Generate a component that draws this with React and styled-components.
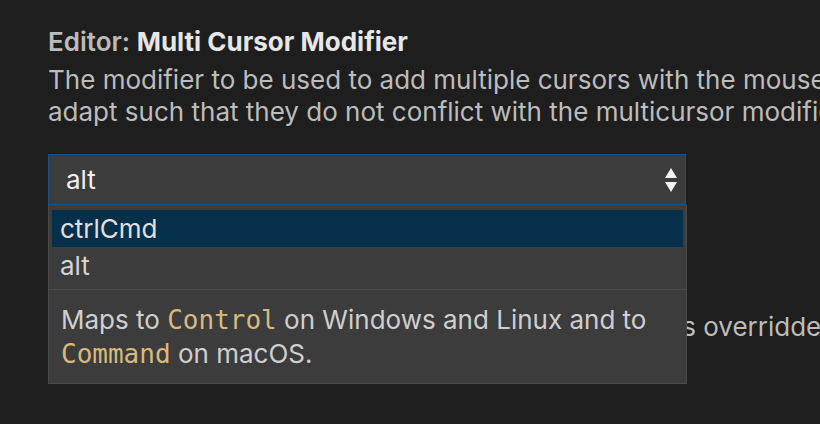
import React from "react"
import styled, { createGlobalStyle } from "styled-components"

const Global = createGlobalStyle`
  html, body {
    margin: 0;
    padding: 0;
    background: #1e1e1e;
    overflow: hidden;
  }
  body {
    font-family: Inter, "Noto Sans", "Liberation Sans", sans-serif;
    -webkit-font-smoothing: antialiased;
  }
`

const Page = styled.div`
  width: 820px;
  height: 424px;
  overflow: hidden;
  padding: 28px 0 0 48px;
  box-sizing: border-box;
`

const Setting = styled.div`
  position: relative;
  display: flex;
  flex-direction: column;
  margin-top: ${(p) => p.gap || 0}px;
`

const Title = styled.div`
  font-size: 26px;
  line-height: 28px;
  font-weight: 700;
  color: #e7e7e7;
  white-space: nowrap;
`

const Category = styled.span`
  color: #bbbbbb;
  font-weight: 600;
`

const Description = styled.div`
  margin-top: 8px;
  font-size: 26px;
  line-height: 32px;
  color: #bcbcbc;
  white-space: nowrap;
`

const SelectBox = styled.div`
  margin-top: 26px;
  width: 638px;
  height: 51px;
  box-sizing: border-box;
  border: 1px solid #21507c;
  background: #3c3c3c;
  display: flex;
  align-items: center;
  justify-content: space-between;
  padding: 0 7px 0 17px;
  font-size: 26px;
  color: #f0f0f0;
`

const Menu = styled.div`
  position: absolute;
  left: 0;
  top: 177px;
  width: 639px;
  height: 179px;
  box-sizing: border-box;
  background: #3c3c3c;
  border: 1px solid #4a4a4a;
  border-top: none;
  padding-top: 5px;
  display: flex;
  flex-direction: column;
  z-index: 2;
`

const Options = styled.div`
  display: flex;
  flex-direction: column;
  padding: 0 3px 5px;
`

const Option = styled.div`
  height: 37px;
  display: flex;
  align-items: center;
  padding-left: 8px;
  font-size: 26px;
  color: ${(p) => (p.selected ? "#e0e0e0" : "#d4d4d4")};
  background: ${(p) => (p.selected ? "#062f4a" : "transparent")};
`

const Help = styled.div`
  border-top: 1px solid #4a4a4a;
  padding: 13px 12px 0;
  font-size: 26px;
  line-height: 33px;
  color: #cfcfcf;
  white-space: nowrap;
`

const Code = styled.code`
  font-family: "DejaVu Sans Mono", "Liberation Mono", monospace;
  font-size: 26px;
  color: #d7ba7d;
`

function Arrows() {
  return (
    <svg width="14" height="26" viewBox="0 0 14 26">
      <path d="M7 1 L13 11 L1 11 Z" fill="#f2f2f2" />
      <path d="M1 15 L13 15 L7 25 Z" fill="#f2f2f2" />
    </svg>
  )
}

export default function App() {
  return (
    <Page>
      <Global />
      <Setting>
        <Title>
          <Category>Editor: </Category>Multi Cursor Modifier
        </Title>
        <Description>
          The modifier to be used to add multiple cursors with the mouse. The Go To Definition and Open Link mouse gestures will
          <br />
          adapt such that they do not conflict with the multicursor modifier. Read more.
        </Description>
        <SelectBox>
          <span>alt</span>
          <Arrows />
        </SelectBox>
        <Menu>
          <Options>
            <Option selected>ctrlCmd</Option>
            <Option>alt</Option>
          </Options>
          <Help>
            Maps to <Code>Control</Code> on Windows and Linux and to
            <br />
            <Code>Command</Code> on macOS.
          </Help>
        </Menu>
      </Setting>
      <Setting gap={70}>
        <Title>
          <Category>Editor: </Category>Multi Cursor Paste
        </Title>
        <Description>
          Controls whether the multi-cursor paste behaviour is overridden by the editor.
        </Description>
      </Setting>
    </Page>
  )
}
